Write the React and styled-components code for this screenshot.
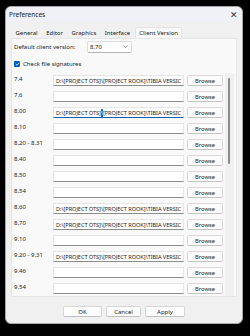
import React from 'react';
import styled, { createGlobalStyle } from 'styled-components';

const GlobalStyle = createGlobalStyle`
  * { box-sizing: border-box; }
  html, body { margin: 0; padding: 0; background: #000; }
  body {
    font-family: "Segoe UI", "Noto Sans", "Open Sans", sans-serif;
    font-size: 6px;
    color: #1a1a1a;
  }
`;

const Page = styled.div`
  width: 250px;
  height: 336px;
  padding: 6px 0 0 5px;
  background: #000;
`;

const Dialog = styled.div`
  width: 238px;
  height: 318px;
  background: #f0f0f0;
  border-radius: 6px;
  border: 1px solid #a8a8a8;
  display: flex;
  flex-direction: column;
  overflow: hidden;
`;

const TitleBar = styled.div`
  height: 15px;
  flex-shrink: 0;
  display: flex;
  align-items: center;
  justify-content: space-between;
  padding: 0 4px 0 3px;
  background: #eff1f6;
  font-size: 6.5px;
`;

const Close = styled.span`
  font-size: 9px;
  color: #333;
  line-height: 1;
`;

const Body = styled.div`
  flex: 1;
  display: flex;
  flex-direction: column;
  padding: 5px 5px 0 5px;
`;

const TabRow = styled.div`
  display: flex;
  height: 11px;
  padding-left: 1px;
`;

const Tab = styled.div`
  display: flex;
  align-items: center;
  padding: 0 ${p => (p.$active ? 3 : 2.5)}px;
  margin-right: ${p => (p.$active ? 0 : 1.5)}px;
  background: ${p => (p.$active ? '#f9f9f9' : '#f0f0f0')};
  border: 1px solid ${p => (p.$active ? '#e3e3e3' : 'transparent')};
  border-bottom: none;
  border-radius: 2px 2px 0 0;
  white-space: nowrap;
`;

const Panel = styled.div`
  height: 259px;
  background: #f9f9f9;
  border: 1px solid #e6e6e6;
  display: flex;
  flex-direction: column;
  overflow: hidden;
`;

const VersionRow = styled.div`
  display: flex;
  align-items: center;
  height: 14px;
  padding: 1px 0 0 2px;
`;

const VersionLabel = styled.span`
  width: 73px;
`;

const Combo = styled.div`
  width: 45px;
  height: 12px;
  display: flex;
  align-items: center;
  justify-content: space-between;
  padding: 0 3px 0 2px;
  background: #fdfdfd;
  border: 1px solid #dcdcdc;
  border-bottom-color: #b5b5b5;
  border-radius: 2px;
`;

const CheckRow = styled.div`
  display: flex;
  align-items: center;
  gap: 3px;
  height: 10px;
  margin-top: 6px;
  padding-left: 2px;
`;

const CheckBox = styled.span`
  width: 6px;
  height: 6px;
  border-radius: 1px;
  background: #005fb8;
  display: flex;
  align-items: center;
  justify-content: center;
`;

const ScrollArea = styled.div`
  flex: 1;
  display: flex;
  margin-top: 2px;
  overflow: hidden;
`;

const Rows = styled.div`
  flex: 1;
  padding: 4px 0 0 2px;
  display: flex;
  flex-direction: column;
  gap: 5px;
`;

const Row = styled.div`
  display: flex;
  align-items: flex-start;
  height: 11px;
  flex-shrink: 0;
`;

const RowLabel = styled.span`
  width: 39px;
  line-height: 8px;
  white-space: nowrap;
`;

const PathField = styled.div`
  width: 131px;
  height: 11px;
  padding: 0 2px;
  display: flex;
  align-items: center;
  overflow: hidden;
  white-space: nowrap;
  background: #fff;
  border: 1px solid #e5e5e5;
  border-bottom: 1px solid ${p => (p.$focused ? '#005fb8' : '#8d8d8d')};
  border-radius: 1px;
  font-size: 5.6px;
  letter-spacing: -0.05px;
`;

const Sel = styled.span`
  background: #0078d7;
  color: #fff;
`;

const Browse = styled.button`
  width: 36px;
  height: 11px;
  margin-left: 3px;
  padding: 0;
  font: inherit;
  font-size: 5.8px;
  color: #1a1a1a;
  background: #fdfdfd;
  border: 1px solid #dadada;
  border-bottom-color: #c4c4c4;
  border-radius: 2px;
`;

const Track = styled.div`
  width: 9px;
  margin: 2px 2px 0 0;
  background: #f0f0f0;
  position: relative;
`;

const Thumb = styled.div`
  position: absolute;
  left: 3px;
  top: 5px;
  width: 2px;
  height: 86px;
  border-radius: 1px;
  background: #8a8a8a;
`;

const Footer = styled.div`
  display: flex;
  justify-content: center;
  gap: 4px;
  padding-top: 9px;
`;

const FooterButton = styled.button`
  width: ${p => p.$w}px;
  height: 11px;
  padding: 0;
  font: inherit;
  font-size: 6px;
  color: #1a1a1a;
  background: #fdfdfd;
  border: 1px solid #d6d6d6;
  border-bottom-color: #c0c0c0;
  border-radius: 2px;
`;

const PATH = 'D:\\[PROJECT OTS]\\[PROJECT ROOK]\\TIBIA VERSIC';

const versions = [
  { label: '7.4', path: PATH },
  { label: '7.6' },
  { label: '8.00', path: PATH, focused: true },
  { label: '8.10' },
  { label: '8.20 - 8.31' },
  { label: '8.40' },
  { label: '8.50' },
  { label: '8.54' },
  { label: '8.60', path: PATH },
  { label: '8.70', path: PATH },
  { label: '9.10' },
  { label: '9.20 - 9.31', path: PATH },
  { label: '9.46' },
  { label: '9.54' },
];

const tabs = ['General', 'Editor', 'Graphics', 'Interface', 'Client Version'];

export default function App() {
  return (
    <Page>
      <GlobalStyle />
      <Dialog>
        <TitleBar>
          <span>Preferences</span>
          <Close>✕</Close>
        </TitleBar>
        <Body>
          <TabRow>
            {tabs.map(t => (
              <Tab key={t} $active={t === 'Client Version'}>{t}</Tab>
            ))}
          </TabRow>
          <Panel>
            <VersionRow>
              <VersionLabel>Default client version:</VersionLabel>
              <Combo>
                <span>8.70</span>
                <svg width="5" height="3" viewBox="0 0 5 3">
                  <path d="M0.5 0.5 L2.5 2.5 L4.5 0.5" fill="none" stroke="#555" strokeWidth="0.6" />
                </svg>
              </Combo>
            </VersionRow>
            <CheckRow>
              <CheckBox>
                <svg width="5" height="4" viewBox="0 0 5 4">
                  <path d="M0.7 2 L2 3.2 L4.3 0.8" fill="none" stroke="#fff" strokeWidth="0.8" />
                </svg>
              </CheckBox>
              <span>Check file signatures</span>
            </CheckRow>
            <ScrollArea>
              <Rows>
                {versions.map(v => (
                  <Row key={v.label}>
                    <RowLabel>{v.label}</RowLabel>
                    <PathField $focused={v.focused}>
                      {v.focused ? (
                        <>D:\[PROJECT OTS]<Sel>\</Sel>[PROJECT ROOK]\TIBIA VERSIC</>
                      ) : (
                        v.path
                      )}
                    </PathField>
                    <Browse>Browse</Browse>
                  </Row>
                ))}
              </Rows>
              <Track>
                <Thumb />
              </Track>
            </ScrollArea>
          </Panel>
          <Footer>
            <FooterButton $w={39}>OK</FooterButton>
            <FooterButton $w={35}>Cancel</FooterButton>
            <FooterButton $w={40}>Apply</FooterButton>
          </Footer>
        </Body>
      </Dialog>
    </Page>
  );
}
